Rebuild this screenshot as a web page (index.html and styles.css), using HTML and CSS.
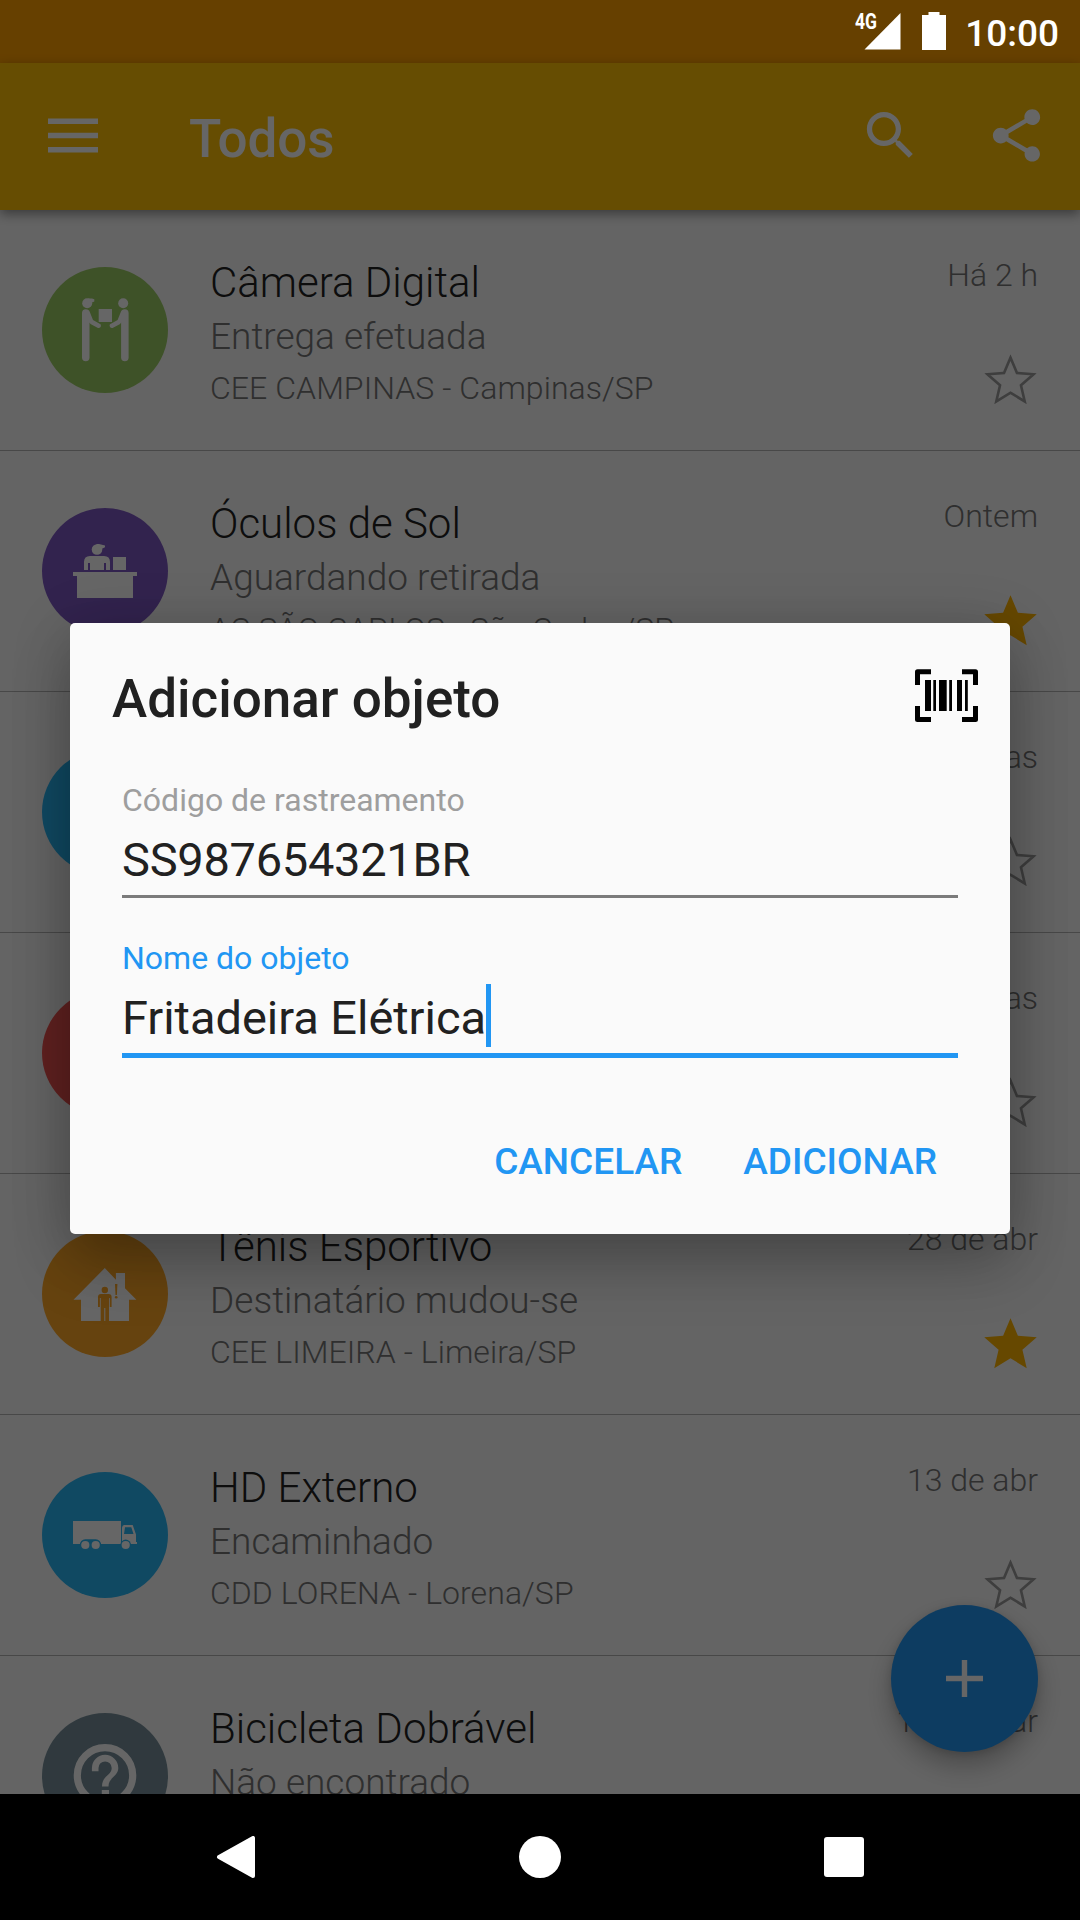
FILE: index.html
```html
<!DOCTYPE html>
<html lang="pt-BR">
<head>
<meta charset="utf-8">
<title>Adicionar objeto</title>
<link rel="stylesheet" href="styles.css">
</head>
<body>
<svg class="defs" width="0" height="0" aria-hidden="true">
  <defs>
    <clipPath id="star-clip"><path d="M12 17.27L18.18 21l-1.64-7.03L22 9.24l-7.19-.61L12 2 9.19 8.63 2 9.24l5.46 4.73L5.82 21z"/></clipPath>
    <symbol id="star" viewBox="0 0 24 24"><path d="M12 17.27L18.18 21l-1.64-7.03L22 9.24l-7.19-.61L12 2 9.19 8.63 2 9.24l5.46 4.73L5.82 21z"/></symbol>
    <symbol id="star-outline" viewBox="0 0 24 24"><path clip-path="url(#star-clip)" fill="none" stroke="currentColor" stroke-width="2" d="M12 17.27L18.18 21l-1.64-7.03L22 9.24l-7.19-.61L12 2 9.19 8.63 2 9.24l5.46 4.73L5.82 21z"/></symbol>
    <symbol id="truck" viewBox="0 0 126 126">
      <path d="M31 49H79V72H31zM80 72V56Q80.3 53 82.5 53H90.7L94 62.5V70H95V72z"/>
      <path class="cut" d="M83 55.3H89.3L91.5 62H82zM37.800 73a5.5 5.500 0 0 1 5.500-5.800H53.700a5.500 5.500 0 0 1 5.500 5.800z"/>
      <circle class="cut" cx="83.700" cy="73" r="5.400"/>
      <circle cx="43.300" cy="73" r="4.100"/><circle cx="53.700" cy="73" r="4.100"/><circle cx="83.700" cy="73" r="4.100"/>
    </symbol>
  </defs>
</svg>

<div class="screen">
  <div class="app">
    <header class="toolbar">
      <svg class="icon menu" viewBox="0 0 63 63"><path d="M6 14.600H56V20H6zM6 28.800H56V34.200H6zM6 43H56V48.400H6z"/></svg>
      <h1 class="toolbar-title">Todos</h1>
      <svg class="icon search" viewBox="0 0 24 24"><path d="M15.500 14h-.79l-.28-.27C15.410 12.590 16 11.110 16 9.500 16 5.910 13.090 3 9.500 3S3 5.910 3 9.500 5.910 16 9.500 16c1.610 0 3.090-.59 4.230-1.570l.27.28v.79l5 4.990L20.490 19l-4.990-5zm-6 0C7.010 14 5 11.990 5 9.500S7.010 5 9.500 5 14 7.010 14 9.500 11.990 14 9.500 14z"/></svg>
      <svg class="icon share" viewBox="0 0 24 24"><path d="M18 16.080c-.76 0-1.440.3-1.960.77L8.910 12.700c.05-.23.09-.46.09-.7s-.04-.47-.09-.7l7.050-4.110c.54.5 1.250.81 2.040.81 1.660 0 3-1.340 3-3s-1.340-3-3-3-3 1.340-3 3c0 .24.04.47.09.7L8.040 9.810C7.500 9.310 6.790 9 6 9c-1.660 0-3 1.340-3 3s1.340 3 3 3c.79 0 1.500-.31 2.040-.81l7.120 4.160c-.05.21-.08.43-.08.65 0 1.610 1.310 2.920 2.920 2.920s2.920-1.310 2.920-2.920-1.310-2.920-2.920-2.920z"/></svg>
    </header>

    <ul class="list">
      <li class="row">
        <svg class="avatar green" viewBox="0 0 126 126">
          <circle cx="45.200" cy="36.300" r="5"/><path d="M46 31.600H50L52.300 32.200V34.500L49 36z"/>
          <circle cx="81.200" cy="36.300" r="5"/>
          <rect x="56.700" y="42" width="13.300" height="13"/>
          <path d="M40 46Q40 42.200 43.800 42.200Q47 42.200 48 45.500L51 53 57.200 56.400A2.300 2.300 0 0 1 56 61L48.500 57 47.500 55.500V91A3.800 3.800 0 0 1 40 91z"/>
          <path d="M86.600 46Q86.600 42.200 82.800 42.200Q79.600 42.200 78.600 45.500L75.600 53 69.400 56.400A2.300 2.300 0 0 0 70.600 61L78.100 57 79.100 55.500V91A3.800 3.800 0 0 0 86.600 91z"/>
        </svg>
        <div class="info"><h2>Câmera Digital</h2><p class="status">Entrega efetuada</p><p class="place">CEE CAMPINAS - Campinas/SP</p></div>
        <div class="meta"><time>Há 2 h</time><svg class="star"><use href="#star-outline"/></svg></div>
      </li>
      <li class="row">
        <svg class="avatar purple" viewBox="0 0 126 126">
          <circle cx="55" cy="41.500" r="5.300"/><path d="M54 36.100H57L63 37.500V39.300L59.500 41z"/>
          <path d="M42 62V54Q42 48 48 48H62Q68 48 68 54V62H64V55H62V62H48V55H46V62z"/>
          <rect x="71" y="49" width="13" height="13"/>
          <path d="M31 64H95V68H91V90H35V68H31z"/>
        </svg>
        <div class="info"><h2>Óculos de Sol</h2><p class="status">Aguardando retirada</p><p class="place">AC SÃO CARLOS - São Carlos/SP</p></div>
        <div class="meta"><time>Ontem</time><svg class="star on"><use href="#star"/></svg></div>
      </li>
      <li class="row">
        <svg class="avatar blue" viewBox="0 0 126 126"><use href="#truck"/></svg>
        <div class="info"></div>
        <div class="meta"><time>Há 2 dias</time><svg class="star"><use href="#star-outline"/></svg></div>
      </li>
      <li class="row">
        <svg class="avatar red" viewBox="0 0 126 126"></svg>
        <div class="info"></div>
        <div class="meta"><time>Há 4 dias</time><svg class="star"><use href="#star-outline"/></svg></div>
      </li>
      <li class="row">
        <svg class="avatar orange" viewBox="0 0 126 126">
          <path d="M62.800 37L73.900 48.800V42H83V57.300L94.400 68.700H87V90H39V68.700H31.500z"/>
          <g class="cut">
            <circle cx="62.800" cy="59" r="3.200"/>
            <path d="M56 66Q56 63 59 63H66.600Q69.600 63 69.600 66V76H67.800V67H67V91H63.300V77H62.300V91H58.700V67H57.900V76H56z"/>
            <path d="M73 53H75.400L74.900 64H73.500z"/><circle cx="74.200" cy="66.300" r="1.300"/>
          </g>
        </svg>
        <div class="info"><h2>Tênis Esportivo</h2><p class="status">Destinatário mudou-se</p><p class="place">CEE LIMEIRA - Limeira/SP</p></div>
        <div class="meta"><time>28 de abr</time><svg class="star on"><use href="#star"/></svg></div>
      </li>
      <li class="row">
        <svg class="avatar blue" viewBox="0 0 126 126"><use href="#truck"/></svg>
        <div class="info"><h2>HD Externo</h2><p class="status">Encaminhado</p><p class="place">CDD LORENA - Lorena/SP</p></div>
        <div class="meta"><time>13 de abr</time><svg class="star"><use href="#star-outline"/></svg></div>
      </li>
      <li class="row">
        <svg class="avatar slate" viewBox="0 0 126 126">
          <circle cx="63" cy="62.300" r="27.700" fill="none" stroke="#fff" stroke-width="7.200"/>
          <path d="M49.900 58.200V55A13.200 13.200 0 0 1 76.300 55C76.300 63.500 66.500 64.300 66.500 73.500H60C60 62.500 69.700 62.500 69.700 55A6.600 6.600 0 0 0 56.500 55V58.200zM59.800 77H67V83.500H59.800z"/>
        </svg>
        <div class="info"><h2>Bicicleta Dobrável</h2><p class="status">Não encontrado</p></div>
        <div class="meta"><time>10 de mar</time></div>
      </li>
    </ul>
    <div class="fab"><svg width="63" height="63" viewBox="0 0 63 63"><path d="M13 28.800H28.800V13H34.200V28.800H50V34.200H34.200V50H28.800V34.200H13z"/></svg></div>
  </div>

  <div class="scrim"></div>

  <div class="statusbar">
    <svg class="signal" width="46" height="37" viewBox="0 0 46 37"><path d="M9.500 36.500L45.500 0V36.500z"/><text x="0" y="16" textLength="22" lengthAdjust="spacingAndGlyphs">4G</text></svg>
    <svg class="battery" width="24" height="38" viewBox="0 0 24 38"><path d="M0 3H6.500V0H17.500V3H24V38H0z"/></svg>
    <span class="clock">10:00</span>
  </div>

  <section class="dialog">
    <div class="dialog-head">
      <h2 class="dialog-title">Adicionar objeto</h2>
      <svg width="63" height="63" viewBox="0 0 63 63"><path fill="none" stroke="#000" stroke-width="5" stroke-linejoin="round" d="M2.500 21V7.800H16M47 7.800H60.500V21M60.500 42V55.500H47M16 55.500H2.500V42"/><path d="M10 16H16V47H10zM18.300 16H21V47H18.300zM24 16H31.700V47H24zM34.200 16H37V47H34.200zM42 16H47V47H42zM50 16H52.800V47H50z"/></svg>
    </div>
    <div class="field code">
      <div class="label">Código de rastreamento</div>
      <div class="input">SS987654321BR</div>
    </div>
    <div class="field focused">
      <div class="label">Nome do objeto</div>
      <div class="input"><span>Fritadeira Elétrica</span><i class="caret"></i></div>
    </div>
    <div class="actions"><span>CANCELAR</span><span>ADICIONAR</span></div>
  </section>

  <nav class="navbar">
    <svg width="42" height="42" viewBox="0 0 42 42"><path stroke="#fff" stroke-width="4" stroke-linejoin="round" d="M4 21L38 2V40z"/></svg>
    <svg width="42" height="42" viewBox="0 0 42 42"><circle cx="21" cy="21" r="21"/></svg>
    <svg width="42" height="42" viewBox="0 0 42 42"><rect x="1" y="1" width="40" height="40" rx="3"/></svg>
  </nav>
</div>
</body>
</html>
```
FILE: styles.css
```css
* { box-sizing: border-box; margin: 0; padding: 0; }
body {
  width: 1080px;
  height: 1920px;
  overflow: hidden;
  font-family: Roboto, "Liberation Sans", sans-serif;
}
svg { display: block; flex: none; }
.defs { position: absolute; }
.screen {
  position: relative;
  display: flex;
  flex-direction: column;
  height: 1920px;
  overflow: hidden;
}
.app {
  position: relative;
  isolation: isolate;
  height: 1794px;
  padding-top: 63px;
  background: #ffa000;
  overflow: hidden;
}

/* toolbar */
.toolbar {
  position: relative;
  z-index: 1;
  display: flex;
  align-items: center;
  height: 147px;
  padding: 0 32px 2px 42px;
  background: #ffc107;
  box-shadow: 0 4px 11px rgba(0, 0, 0, .42);
}
.icon { width: 63px; height: 63px; fill: #fff; }
.toolbar-title {
  margin: 7px auto 0 84px;
  font-size: 53px;
  font-weight: 500;
  line-height: 60px;
  letter-spacing: -.1px;
  color: #fff;
}
.search { margin-right: 63px; }

/* tracked objects */
.list { height: 1584px; background: #fafafa; list-style: none; }
.row {
  display: flex;
  height: 241px;
  padding: 0 43px 0 42px;
  border-bottom: 1px solid #b4b4b4;
}
.avatar {
  width: 126px;
  height: 126px;
  margin-top: 57px;
  border-radius: 50%;
  fill: #fff;
  background: var(--tone);
}
.cut { fill: var(--tone); }
.green { --tone: #9ccc65; }
.purple { --tone: #7e57c2; }
.blue { --tone: #29b6f6; }
.red { --tone: #ef5350; }
.orange { --tone: #ffa726; }
.slate { --tone: #78909c; }
.info {
  flex: 1;
  padding: 47.6px 0 0 42px;
  font-weight: 300;
  color: #757575;
  white-space: nowrap;
}
.info h2 { font-size: 42px; font-weight: 300; line-height: 50px; color: #212121; }
.status { margin-top: 7px; font-size: 37px; line-height: 44px; }
.place { margin-top: 10px; font-size: 32px; line-height: 38px; letter-spacing: .06px; }
.meta {
  display: flex;
  flex-direction: column;
  align-items: flex-end;
  padding-top: 46px;
  font-size: 32px;
  font-weight: 300;
  line-height: 38px;
  color: #757575;
}
.meta time { margin-right: -1px; }
.star { width: 63px; height: 63px; margin: 55px -5px 0 0; color: #9b9b9b; }
.star.on { fill: #ffb300; }

/* floating button and scrim lie over the list */
.fab {
  position: absolute;
  right: 42px;
  bottom: 42px;
  display: grid;
  place-items: center;
  width: 147px;
  height: 147px;
  border-radius: 50%;
  background: #2196f3;
  box-shadow: 0 14px 26px rgba(0, 0, 0, .26), 0 2px 8px rgba(0, 0, 0, .14);
  fill: #fff;
}
.scrim { position: absolute; inset: 0 0 126px; background: rgba(0, 0, 0, .6); }

/* system status bar */
.statusbar {
  position: absolute;
  inset: 0 0 auto;
  display: flex;
  justify-content: flex-end;
  align-items: flex-start;
  height: 63px;
  padding: 0 21px 0 0;
  color: #fff;
  fill: #fff;
}
.signal { margin: 13px 21px 0 0; font-size: 21.5px; font-weight: 700; overflow: visible; }
.battery { margin: 12px 19px 0 0; }
.clock { margin-top: 12px; font-size: 37px; font-weight: 500; line-height: 44px; }

/* dialog */
.dialog {
  position: absolute;
  left: 70px;
  top: 623px;
  width: 940px;
  height: 611px;
  padding: 41px 32px 0 42px;
  border-radius: 5px;
  background: #fafafa;
  box-shadow: 0 34px 60px rgba(0, 0, 0, .18), 0 8px 60px rgba(0, 0, 0, .2);
}
.dialog-head { display: flex; justify-content: space-between; height: 63px; }
.dialog-title { margin-top: 5px; font-size: 53px; font-weight: 500; line-height: 60px; color: #212121; }
.field { width: 836px; height: 158px; margin-left: 10px; }
.dialog-head + .field { margin-top: 53px; }
.label { height: 40px; font-size: 32px; line-height: 40px; color: #9e9e9e; }
.input {
  display: flex;
  height: 68px;
  margin-top: 10px;
  border-bottom: 3px solid #7b7b7b;
  font-size: 47px;
  line-height: 60px;
  color: #212121;
}
.code .input { letter-spacing: -.28px; }
.focused .label { color: #2196f3; }
.focused .input { height: 70px; border-bottom: 5px solid #2196f3; letter-spacing: -.04px; }
.caret { width: 5px; height: 63px; margin-top: -4px; background: #2196f3; }
.actions {
  display: flex;
  justify-content: flex-end;
  gap: 61px;
  margin-top: 41px;
  padding-right: 41px;
  font-size: 37px;
  font-weight: 500;
  line-height: 50px;
  color: #2196f3;
}

/* system navigation */
.navbar {
  display: flex;
  justify-content: center;
  align-items: center;
  gap: 262px;
  height: 126px;
  background: #000;
  fill: #fff;
}
```
